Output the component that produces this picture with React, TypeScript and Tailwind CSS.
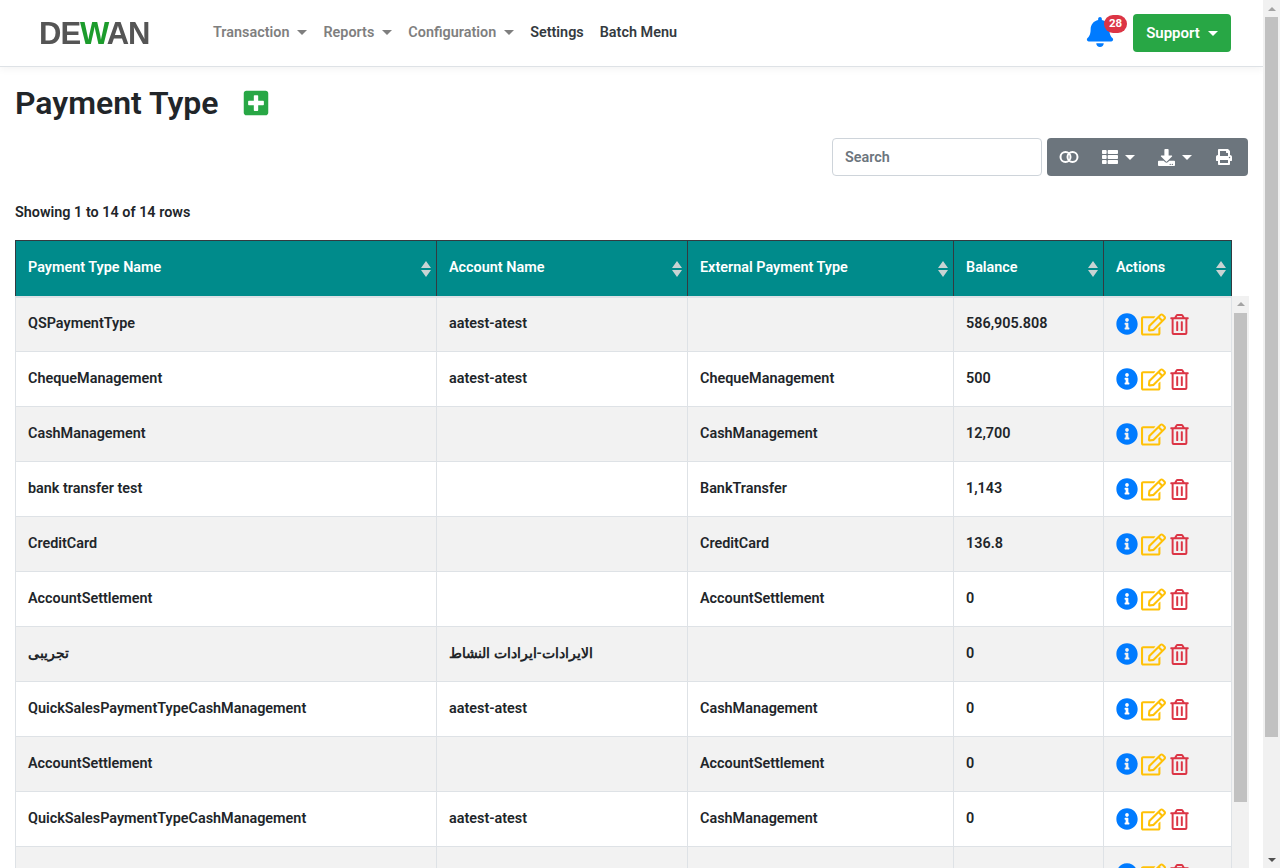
import React from "react";
import { FaBell, FaPlusSquare, FaThList, FaDownload, FaPrint, FaInfoCircle, FaRegEdit, FaRegTrashAlt } from "react-icons/fa";

const rows: [string, string, string, string][] = [
  ["QSPaymentType", "aatest-atest", "", "586,905.808"],
  ["ChequeManagement", "aatest-atest", "ChequeManagement", "500"],
  ["CashManagement", "", "CashManagement", "12,700"],
  ["bank transfer test", "", "BankTransfer", "1,143"],
  ["CreditCard", "", "CreditCard", "136.8"],
  ["AccountSettlement", "", "AccountSettlement", "0"],
  ["تجریبی", "الایرادات-ایرادات النشاط", "", "0"],
  ["QuickSalesPaymentTypeCashManagement", "aatest-atest", "CashManagement", "0"],
  ["AccountSettlement", "", "AccountSettlement", "0"],
  ["QuickSalesPaymentTypeCashManagement", "aatest-atest", "CashManagement", "0"],
  ["", "", "", ""],
];

function Caret({ className = "" }: { className?: string }) {
  return <span className={`inline-block w-0 h-0 border-x-[5px] border-x-transparent border-t-[5px] border-t-current ${className}`} />;
}

function Sort() {
  return (
    <svg width="10" height="16" viewBox="0 0 10 16" className="absolute right-[5px] top-[20px]">
      <path d="M5 0 L10 7 H0 Z M5 16 L0 9 H10 Z" fill="#c9d3d3" />
    </svg>
  );
}

function Head({ label, w }: { label: string; w: string }) {
  return (
    <th className={`relative ${w} border border-[#343a40] border-b-0 pl-3 text-left font-semibold text-white`}>
      {label}
      <Sort />
    </th>
  );
}

function Arrow({ down = false }: { down?: boolean }) {
  return down ? (
    <span className="block w-0 h-0 border-x-[4px] border-x-transparent border-t-[4px] border-t-[#505050]" />
  ) : (
    <span className="block w-0 h-0 border-x-[4px] border-x-transparent border-b-[4px] border-b-[#a3a3a3]" />
  );
}

export default function App() {
  return (
    <div className="flex h-[868px] overflow-hidden bg-white text-[#212529] text-[14.4px] font-semibold font-['Roboto',sans-serif]">
      <div className="flex w-[1263px] flex-col overflow-hidden">
        <nav className="flex h-[67px] shrink-0 items-center border-b border-[#dee2e6] shadow-[0_2px_8px_rgba(0,0,0,0.05)] pl-[39px] pr-[32px]">
          <div className="w-[130px] text-[31px] leading-none font-bold tracking-[-1px] text-[#555] blur-[0.6px] font-['Liberation_Sans',sans-serif]">
            DE<span className="text-[#1c9c2c]">W</span>AN
          </div>
          <div className="ml-[44px] flex items-center text-[#7f7f7f]">
            <span>Transaction</span><Caret className="ml-[8px]" />
            <span className="ml-[16px]">Reports</span><Caret className="ml-[8px]" />
            <span className="ml-[16px]">Configuration</span><Caret className="ml-[8px]" />
            <span className="ml-[16px] text-[#343a40]">Settings</span>
            <span className="ml-[16px] text-[#343a40]">Batch Menu</span>
          </div>
          <div className="ml-auto flex items-center">
            <div className="relative h-[38px] w-[48px]">
              <FaBell className="text-[#007bff] absolute left-0 top-[3px]" size={30} />
              <span className="absolute left-[19px] top-[1px] flex h-[18px] w-[23px] items-center justify-center rounded-full bg-[#dc3545] text-[11.5px] font-bold text-white">28</span>
            </div>
            <button className="flex h-[38px] w-[98px] items-center justify-center rounded-[4px] bg-[#28a745] text-[15px] text-white">
              Support<Caret className="ml-[8px]" />
            </button>
          </div>
        </nav>

        <div className="pl-[15px]">
          <div className="mt-[16px] flex items-center">
            <h1 className="text-[32px] leading-[40px] font-semibold">Payment Type</h1>
            <FaPlusSquare className="ml-[23px] text-[#28a745]" size={28} />
          </div>
          <div className="mt-[15px] flex w-[1233px] justify-end">
            <input
              readOnly
              placeholder="Search"
              className="h-[38px] w-[210px] rounded-[4px] border border-[#ced4da] px-3 placeholder:text-[#6c757d] outline-none"
            />
            <div className="ml-[5px] flex h-[38px] w-[201px] items-center rounded-[4px] bg-[#6c757d] pl-[12px] text-white">
              <svg width="20" height="12" viewBox="0 0 20 12" fill="none" stroke="#fff" strokeWidth="2">
                <circle cx="6.5" cy="6" r="5" />
                <circle cx="13.5" cy="6" r="5" />
              </svg>
              <FaThList className="ml-[23px]" size={16} />
              <Caret className="ml-[7px]" />
              <FaDownload className="ml-[23px]" size={17} />
              <Caret className="ml-[7px]" />
              <FaPrint className="ml-[24px]" size={16} />
            </div>
          </div>
          <div className="mt-[27px] leading-[20px]">Showing 1 to 14 of 14 rows</div>

          <div className="mt-[17px] flex w-[1233px] flex-col">
            <table className="w-[1216px] table-fixed border-collapse">
              <thead>
                <tr className="h-[55px] bg-[#008b8b]">
                  <Head label="Payment Type Name" w="w-[421px]" />
                  <Head label="Account Name" w="w-[251px]" />
                  <Head label="External Payment Type" w="w-[266px]" />
                  <Head label="Balance" w="w-[150px]" />
                  <Head label="Actions" w="w-[128px]" />
                </tr>
              </thead>
            </table>
            <div className="flex">
              <table className="w-[1216px] table-fixed border-collapse border-t-[2px] border-t-[#dee2e6]">
                <colgroup>
                  <col className="w-[421px]" />
                  <col className="w-[251px]" />
                  <col className="w-[266px]" />
                  <col className="w-[150px]" />
                  <col className="w-[128px]" />
                </colgroup>
                <tbody>
                  {rows.map((r, i) => (
                    <tr key={i} className={`h-[55px] ${i % 2 === 0 ? "bg-[#f2f2f2]" : "bg-white"}`}>
                      {r.map((c, j) => (
                        <td key={j} className="border border-[#dee2e6] pl-3">{c}</td>
                      ))}
                      <td className="border border-[#dee2e6] pl-3">
                        <div className="flex items-center">
                          <FaInfoCircle className="text-[#007bff]" size={22} />
                          <FaRegEdit className="ml-[3px] text-[#ffc107]" size={25} />
                          <FaRegTrashAlt className="ml-[3px] text-[#dc3545]" size={21} />
                        </div>
                      </td>
                    </tr>
                  ))}
                </tbody>
              </table>
              <div className="w-[17px] shrink-0 self-stretch bg-[#f1f1f1] pl-[2px] pr-[2px]">
                <div className="flex h-[17px] items-center justify-center"><Arrow /></div>
                <div className="h-[489px] w-[13px] bg-[#c1c1c1]" />
              </div>
            </div>
          </div>
        </div>
      </div>
      <div className="flex h-full w-[17px] shrink-0 flex-col bg-[#f1f1f1] px-[2px]">
        <div className="flex h-[17px] items-center justify-center"><Arrow /></div>
        <div className="h-[720px] w-[13px] bg-[#c1c1c1]" />
        <div className="mt-auto flex h-[17px] items-center justify-center"><Arrow down /></div>
      </div>
    </div>
  );
}
